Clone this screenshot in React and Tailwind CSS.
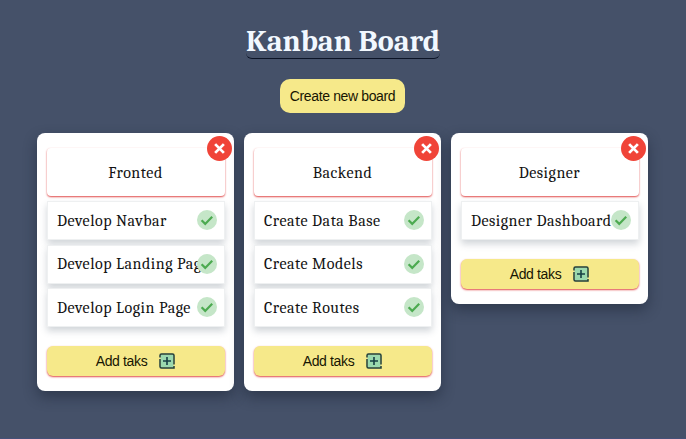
const boards = [
  { title: 'Fronted', tasks: ['Develop Navbar', 'Develop Landing Page', 'Develop Login Page'] },
  { title: 'Backend', tasks: ['Create Data Base', 'Create Models', 'Create Routes'] },
  { title: 'Designer', tasks: ['Designer Dashboard'] },
];

function CloseIcon() {
  return (
    <svg viewBox="0 0 24 24" className="block size-[25px]">
      <circle cx="12" cy="12" r="12" fill="#f04438" />
      <path d="M7.8 7.8l8.4 8.4M16.2 7.8l-8.4 8.4" stroke="#fff" strokeWidth="2.7" />
    </svg>
  );
}

function CheckIcon() {
  return (
    <svg viewBox="0 0 20 20" className="block size-5">
      <circle cx="10" cy="10" r="10" fill="#c5e6c8" />
      <path d="M4.6 10.3l3.6 3.6 7-7.2" fill="none" stroke="#4caa50" strokeWidth="2.2" />
    </svg>
  );
}

function AddIcon() {
  return (
    <svg viewBox="0 0 16 16" className="block size-4">
      <rect x="1.5" y="1.5" width="13" height="13" rx="1" fill="#9bd9ae" />
      <path d="M1 4.5V2.5Q1 1 2.5 1H13.5Q15 1 15 2.5V11.5M15 13V15H2.5Q1 15 1 13.5V6" fill="none" stroke="#203f3d" strokeWidth="1.5" />
      <path d="M8 4v8M4 8h8" stroke="#173f45" strokeWidth="1.6" />
    </svg>
  );
}

function Board({ title, tasks }) {
  return (
    <section className="relative w-[197px] rounded-lg bg-white px-[9.5px] pt-[15px] pb-[13.5px] shadow-[0_6px_14px_rgba(20,28,45,0.45)]">
      <button className="absolute top-[2.5px] right-[2px] z-10"><CloseIcon /></button>
      <h2 className="flex h-[48px] items-center justify-center rounded bg-white pt-px text-[16px] tracking-[0.5px] shadow-[0_1px_2px_#e04b4b]">{title}</h2>
      <ul className="mt-[5px] flex flex-col gap-[4.5px]">
        {tasks.map((task) => (
          <li key={task} className="relative flex h-[39px] items-center border border-[#eef0f1] bg-white pl-[9.5px] text-[16px] tracking-[0.5px] whitespace-nowrap shadow-[0_4px_7px_rgba(55,75,90,0.23)]">
            <span>{task}</span>
            <button className="absolute top-[8px] right-[6.5px]"><CheckIcon /></button>
          </li>
        ))}
      </ul>
      <button className="mt-[19px] mb-px flex h-[30px] w-full items-center justify-center gap-3 rounded-md bg-[#f6e98a] font-['Liberation_Sans',sans-serif] text-[14px] tracking-[-0.35px] text-[#171502] shadow-[0_1px_2px_#e04b4b]">
        Add taks <AddIcon />
      </button>
    </section>
  );
}

export default function App() {
  return (
    <main className="flex h-[439px] w-[686px] flex-col items-center overflow-hidden border-b border-[#465078] bg-[#455169] pt-6 font-[Cambria,Caladea,'Liberation_Serif',serif] text-[#121212]">
      <h1 className="h-[35px] rounded-md border-b border-[#0b1326] text-[30.2px] leading-[36px] font-bold whitespace-nowrap text-[#f2f8ff]">Kanban Board</h1>
      <button className="mt-5 mr-px h-[34px] w-[125px] rounded-[10px] bg-[#f6e98a] font-['Liberation_Sans',sans-serif] text-[14px] tracking-[-0.37px] whitespace-nowrap text-[#171502]">Create new board</button>
      <div className="mt-5 mr-px flex w-[611px] items-start gap-[10px]">
        {boards.map((board) => <Board key={board.title} {...board} />)}
      </div>
    </main>
  );
}
